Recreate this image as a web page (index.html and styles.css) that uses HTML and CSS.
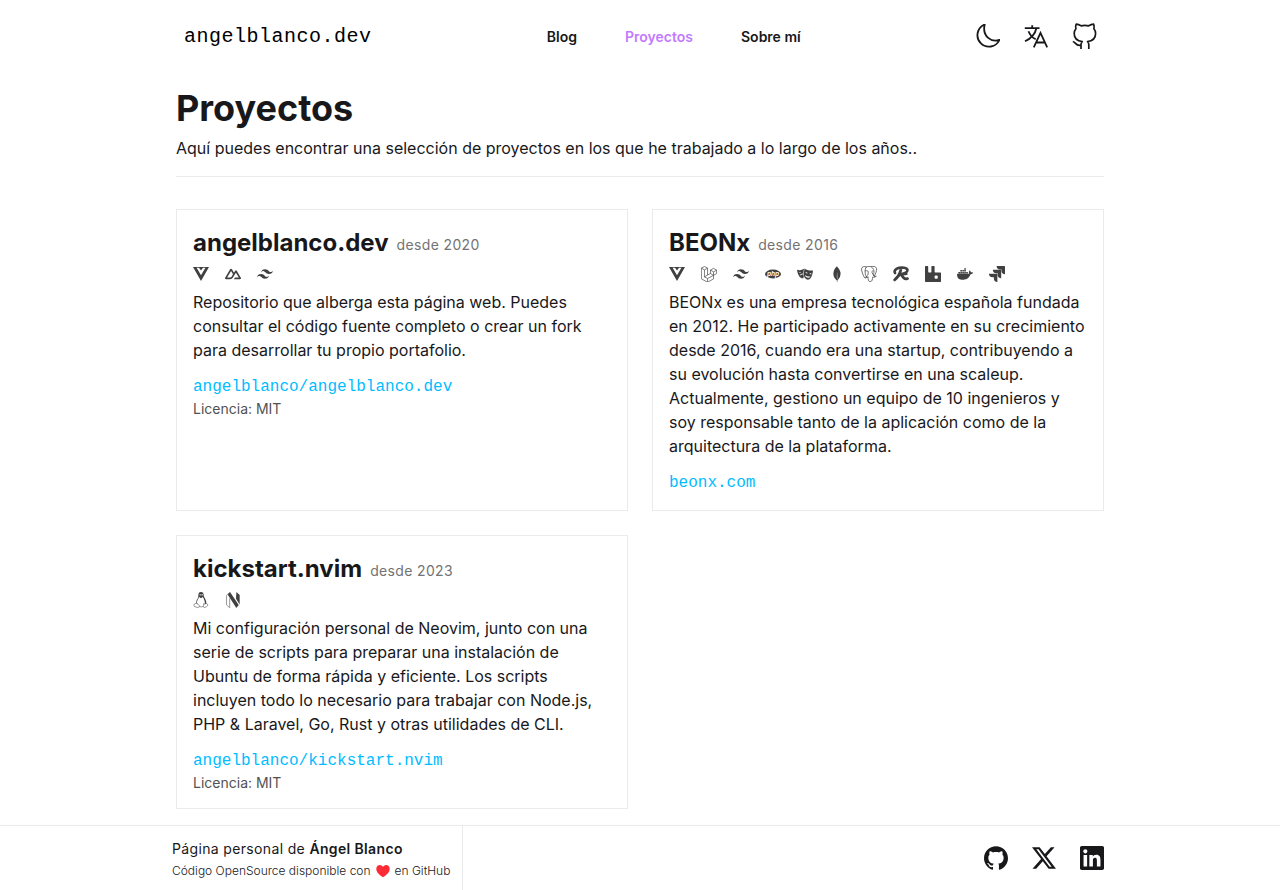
FILE: index.html
```html
<!DOCTYPE html>
<html lang="es">
<head>
<meta charset="utf-8">
<meta name="viewport" content="width=device-width, initial-scale=1">
<title>Proyectos | angelblanco.dev</title>
<link rel="stylesheet" href="styles.css">
</head>
<body>
<svg class="sprite" aria-hidden="true">
  <symbol id="vue" viewBox="0 0 24 24"><path fill-rule="evenodd" d="M0 1.600H24L12 22.400zM5.400 2.600 12 13.900 18.600 2.600H15L12 6.600 9 2.600z"/></symbol>
  <symbol id="nuxt" viewBox="0 0 24 24"><path d="M13.4642 19.8295h8.9218c.2834 0 .5618-.0723.8072-.2098a1.5899 1.5899 0 0 0 .5908-.5732 1.5293 1.5293 0 0 0 .216-.783 1.529 1.529 0 0 0-.2167-.7828L17.7916 7.4142a1.6 1.6 0 0 0-.5907-.573 1.6524 1.6524 0 0 0-.807-.2099c-.2833 0-.5616.0724-.807.2098a1.6 1.6 0 0 0-.5907.5731L13.4642 9.99l-2.9954-5.0366a1.5913 1.5913 0 0 0-.591-.573 1.6533 1.6533 0 0 0-.8071-.2098c-.2834 0-.5617.0723-.8072.2097a1.5913 1.5913 0 0 0-.591.573L.2168 17.4808A1.5292 1.5292 0 0 0 0 18.2635c-.0001.2749.0744.545.216.783a1.59 1.59 0 0 0 .5908.5732c.2454.1375.5238.2098.8072.2098h5.6003c2.219 0 3.8554-.9454 4.9813-2.7899l2.7337-4.5922L16.3935 9.99l4.3944 7.382h-5.8588ZM7.123 17.3694l-3.9083-.0009 5.8586-9.8421 2.9232 4.921-1.9572 3.2897c-.7478 1.1967-1.5972 1.6323-2.9163 1.6323z"/></symbol>
  <symbol id="tailwind" viewBox="0 0 24 24"><path d="M12.001 4.800c-3.200 0-5.200 1.600-6 4.800c1.200-1.600 2.600-2.200 4.200-1.800c.913.228 1.565.89 2.288 1.624C13.666 10.618 15.027 12 18.001 12c3.200 0 5.200-1.600 6-4.800c-1.200 1.600-2.600 2.200-4.200 1.800c-.913-.228-1.565-.89-2.288-1.624C16.337 6.182 14.976 4.800 12.001 4.800zM6.001 12c-3.200 0-5.200 1.600-6 4.800c1.200-1.600 2.600-2.200 4.200-1.800c.913.228 1.565.89 2.288 1.624c1.177 1.194 2.538 2.576 5.512 2.576c3.200 0 5.200-1.600 6-4.800c-1.200 1.600-2.600 2.200-4.200 1.800c-.913-.228-1.565-.89-2.288-1.624C10.337 13.382 8.976 12 6.001 12z"/></symbol>
  <symbol id="laravel" viewBox="0 0 24 24"><path fill="none" stroke="currentColor" stroke-width="1" stroke-linejoin="round" d="M.6 3.200 5.200.6l4.600 2.600v10.400l4.400-2.500V6.200l4.600-2.700 4.600 2.700v5.200l-4.600 2.600v5.300l-9 5.100-9.200-5.200zM.6 3.200l4.600 2.600 4.600-2.600M5.200 5.800v10.600l4.600-2.800M5.200 16.400l4.600 2.500 9-5M9.800 18.900v5.200M14.200 6.200l4.600 2.600 4.600-2.600M18.800 8.800V14M14.200 11.200l4.600 2.800"/></symbol>
  <symbol id="playwright" viewBox="0 0 24 24"><path fill-rule="evenodd" d="M0 5.800c3 1.100 6 .9 9-.8l1.600-.9c-.8 3.800-1.700 7.800-.5 10.900l-.5 3.200c-2 .3-4.400-.4-6.200-2.600C1.500 12.900.5 9.500 0 5.800zm3 4.700 3.200-1c-1-1.200-2.800-.8-3.200 1zm1 4.500c1.200-1.500 2.800-2.300 4.800-2.300l-.1-1.400c-2.800.1-4.300 1.500-4.700 3.700z"/><path fill-rule="evenodd" d="M11.300 3.600c3.500 2.700 7.800 3.700 12.700 3-.4 4.400-1.300 8-3.200 11-1.700 2.600-4.300 3.600-6.800 2.300-2.500-1.300-3.700-3.900-3.700-7.400 0-3 .4-6.200 1-8.900zm1.200 6.800 3.500 1c-.4-2-2.700-2.600-3.500-1zm6 1.600 3.500.9c-.4-2-2.700-2.500-3.500-.9zm-6.500 1.400c.4 4 6 5.700 8.200 2.200-3 .4-5.800-.4-8.200-2.200z"/></symbol>
  <symbol id="mongo" viewBox="0 0 24 24"><path d="M17.193 9.555c-1.264-5.580-4.252-7.414-4.573-8.115-.28-.394-.53-.954-.735-1.440-.036.495-.055.685-.523 1.184-.723.566-4.438 3.682-4.740 10.020-.282 5.912 4.270 9.435 4.888 9.884l.07.05A73.490 73.490 0 0111.910 24h.481c.114-1.032.284-2.056.51-3.070.417-.296.604-.463.85-.693a11.342 11.342 0 003.639-8.464c.01-.814-.103-1.662-.197-2.218zm-5.336 8.195s0-8.291.275-8.290c.213 0 .49 10.695.49 10.695-.381-.045-.765-1.760-.765-2.405z"/></symbol>
  <symbol id="postgres" viewBox="0 0 24 24"><path fill="none" stroke="currentColor" stroke-width="1.100" stroke-linecap="round" stroke-linejoin="round" d="M8.500 16.200C7.500 18.700 6 18.900 4.800 16.700 3 13.200.7 8 .8 4.400 1 .8 5 .1 8.200 1.400c-2 2-2.200 5-1.900 7.300.3 2.500-.8 4.300 2.200 7.500zM8.200 1.400c2.300-1 5-1 7.200-.3 2.800-1 7.300-.8 7.900 2.800.4 3.500-1.500 8.500-3.600 11.500-1.400-1.400-.8-3-.3-5.400.5-3.200-.4-6.200-4-8.900M9.400 14.300c1.600-.8 1.700-2.900 1.300-5.700M6.200 7.400c1.300-.9 3-.8 4.400.5M18 7.400c-2 .1-2 1.200-1.400 2.400 1 2 1.700 3.800 3.100 5.600 1.500.3 2.400 0 3.300-.3-.9 1.500-3.600 2.300-5.700 1.700-.2 3 0 6.200-3.300 6.600-3.300.3-3.400-3.400-3.500-6.500M10.500 16.500c-1.500 1-3 .9-4 .2"/></symbol>
  <symbol id="redis" viewBox="0 0 24 24"><path fill="none" stroke="currentColor" stroke-width="4" stroke-linecap="round" stroke-linejoin="round" d="M3 10.500C1.200 7 4.200 3.800 9 2.800c5-1 11.600-.5 12.500 2.700.9 3.300-4 6.500-9.200 6.500 2.200 4.300 4.200 9.200 9.500 6.800M11.800 6C10 12 7.500 17 2.500 20.800"/><path fill="none" stroke="currentColor" stroke-width="3" stroke-linecap="round" d="M4 18.500c2.500-3.500 9-6 16.500-6.500"/></symbol>
  <symbol id="rabbit" viewBox="0 0 24 24"><path d="M23.035 9.601h-7.677a.956.956 0 01-.962-.962V.962a.956.956 0 00-.962-.956H10.560a.956.956 0 00-.962.956V8.640a.956.956 0 01-.962.962H5.762a.956.956 0 01-.961-.962V.962A.956.956 0 003.839 0H.959a.956.956 0 00-.956.962v22.076A.956.956 0 00.965 24h22.070a.956.956 0 00.962-.962V10.580a.956.956 0 00-.962-.98zm-3.860 8.152a1.437 1.437 0 01-1.437 1.443h-1.924a1.437 1.437 0 01-1.436-1.443v-1.917a1.437 1.437 0 011.436-1.443h1.924a1.437 1.437 0 011.437 1.443z"/></symbol>
  <symbol id="docker" viewBox="0 0 24 24"><path d="M13.983 11.078h2.119a.186.186 0 00.186-.185V9.006a.186.186 0 00-.186-.186h-2.119a.185.185 0 00-.185.185v1.888c0 .102.083.185.185.185m-2.954-5.430h2.118a.186.186 0 00.186-.186V3.574a.186.186 0 00-.186-.185h-2.118a.185.185 0 00-.185.185v1.888c0 .102.082.185.185.185m0 2.716h2.118a.187.187 0 00.186-.186V6.290a.186.186 0 00-.186-.185h-2.118a.185.185 0 00-.185.185v1.887c0 .102.082.185.185.186m-2.930 0h2.120a.186.186 0 00.184-.186V6.290a.185.185 0 00-.185-.185H8.100a.185.185 0 00-.185.185v1.887c0 .102.083.185.185.186m-2.964 0h2.119a.186.186 0 00.185-.186V6.290a.185.185 0 00-.185-.185H5.136a.186.186 0 00-.186.185v1.887c0 .102.084.185.186.186m5.893 2.715h2.118a.186.186 0 00.186-.185V9.006a.186.186 0 00-.186-.186h-2.118a.185.185 0 00-.185.185v1.888c0 .102.082.185.185.185m-2.930 0h2.120a.185.185 0 00.184-.185V9.006a.185.185 0 00-.184-.186h-2.120a.185.185 0 00-.184.185v1.888c0 .102.083.185.185.185m-2.964 0h2.119a.185.185 0 00.185-.185V9.006a.185.185 0 00-.184-.186h-2.120a.186.186 0 00-.186.186v1.887c0 .102.084.185.186.185m-2.920 0h2.120a.185.185 0 00.184-.185V9.006a.185.185 0 00-.184-.186h-2.120a.185.185 0 00-.184.185v1.888c0 .102.082.185.185.185M23.763 9.890c-.065-.051-.672-.51-1.954-.51-.338.001-.676.03-1.010.087-.248-1.700-1.653-2.530-1.716-2.566l-.344-.199-.226.327c-.284.438-.49.922-.612 1.430-.23.97-.09 1.882.403 2.661-.595.332-1.550.413-1.744.42H.751a.751.751 0 00-.75.748 11.376 11.376 0 00.692 4.062c.545 1.428 1.355 2.480 2.410 3.124 1.180.723 3.100 1.137 5.275 1.137.983.003 1.963-.086 2.930-.266a12.248 12.248 0 003.823-1.389c.98-.567 1.860-1.288 2.610-2.136 1.252-1.418 1.998-2.997 2.553-4.400h.221c1.372 0 2.215-.549 2.680-1.009.309-.293.55-.65.707-1.046l.098-.288Z"/></symbol>
  <symbol id="jira" viewBox="0 0 24 24"><path d="M11.571 11.513H0a5.218 5.218 0 0 0 5.232 5.215h2.130v2.057A5.215 5.215 0 0 0 12.575 24V12.518a1.005 1.005 0 0 0-1.005-1.005zm5.723-5.756H5.736a5.215 5.215 0 0 0 5.215 5.214h2.129v2.058a5.218 5.218 0 0 0 5.215 5.214V6.758a1.001 1.001 0 0 0-1.001-1.001zM23.013 0H11.455a5.215 5.215 0 0 0 5.215 5.215h2.129v2.057A5.215 5.215 0 0 0 24 12.483V1.005A1.001 1.001 0 0 0 23.013 0Z"/></symbol>
  <symbol id="linux" viewBox="0 0 24 24"><path fill-rule="evenodd" d="M12 0c3 0 4.200 2.200 4 5 0 3.500 4.500 6.500 4 12l-2.500 1.500c1-4-1-8-3-11L12 9.500 9.500 7.500c-1.800 3-4 6-3.600 9.500L8 19.500 5 17c-.5-3 1-6.500 2.800-8.500C8.500 5.500 7 0 12 0zm-2 4c0 1 .3 1.500.8 1.500s.7-.5.7-1.200S11 3 10.600 3 10 3.400 10 4zm2.700 0c0 .9.4 1.500 1 1.500s.9-.6.9-1.300-.4-1.200-1-1.200-.9.400-.9 1z"/><path fill="none" stroke="currentColor" stroke-width=".8" stroke-linejoin="round" d="M5.500 16.300 9.500 20.500c.6 1.500-.5 2.800-2.500 2.800L2 21.700c-1.300-.6-.2-2-.2-3.200zM16 17.500c1 1.200 2.500 1.200 4-.8l2.600 3c-1.600 1.500-3 3-4.600 3.600-1.800.3-2.600-.8-2.400-2.500zM9.500 21.800c2 .7 4 .7 6 0"/></symbol>
  <symbol id="neovim" viewBox="0 0 24 24"><path d="M7.500 0 20.600 19.500 17 24 4.200 4.200zM17.100 0l4.900 4.600v14L16.500 10z"/><path fill="none" stroke="currentColor" stroke-width=".8" d="M7 .6 2.300 5.200v14L7 23.700V9.500"/></symbol>
  <symbol id="moon" viewBox="0 0 24 24"><path fill="none" stroke="currentColor" stroke-width="1.800" stroke-linejoin="round" d="M8.700.500A11.500 11.500 0 1 0 23.500 15.800C16 18.800 5.800 12.800 8.700.500Z"/></symbol>
  <symbol id="translate" viewBox="0 0 24 24"><path fill="none" stroke="currentColor" stroke-width="1.800" d="M.8 4.200H15.500M8.200 1.300v3M12.400 4.200C11 10.500 6.500 14.700 1 17.300M4.500 7.200c1.500 4 4 6.500 7.200 8M9.800 23.300 16.500 8.900l6.700 14.400M12 18.500h9"/></symbol>
  <symbol id="github" viewBox="0 0 24 24"><path d="M12 .297c-6.630 0-12 5.373-12 12 0 5.303 3.438 9.800 8.205 11.385.6.113.820-.258.820-.577 0-.285-.01-1.040-.015-2.040-3.338.724-4.042-1.610-4.042-1.610C4.422 18.070 3.633 17.700 3.633 17.700c-1.087-.744.084-.729.084-.729 1.205.084 1.838 1.236 1.838 1.236 1.070 1.835 2.809 1.305 3.495.998.108-.776.417-1.305.76-1.605-2.665-.3-5.466-1.332-5.466-5.930 0-1.310.465-2.380 1.235-3.220-.135-.303-.54-1.523.105-3.176 0 0 1.005-.322 3.300 1.230.96-.267 1.980-.399 3-.405 1.020.006 2.040.138 3 .405 2.280-1.552 3.285-1.230 3.285-1.230.645 1.653.24 2.873.12 3.176.765.84 1.230 1.910 1.230 3.220 0 4.610-2.805 5.625-5.475 5.920.42.36.81 1.096.81 2.220 0 1.606-.015 2.896-.015 3.286 0 .315.21.69.825.57C20.565 22.092 24 17.592 24 12.297c0-6.627-5.373-12-12-12"/></symbol>
  <symbol id="x" viewBox="0 0 24 24"><path d="M18.901 1.153h3.680l-8.040 9.190L24 22.846h-7.406l-5.800-7.584-6.638 7.584H.474l8.600-9.830L0 1.154h7.594l5.243 6.932ZM17.610 20.644h2.039L6.486 3.240H4.298Z"/></symbol>
  <symbol id="linkedin" viewBox="0 0 24 24"><path d="M20.447 20.452h-3.554v-5.569c0-1.328-.027-3.037-1.852-3.037-1.853 0-2.136 1.445-2.136 2.939v5.667H9.351V9h3.414v1.561h.046c.477-.9 1.637-1.850 3.370-1.850 3.601 0 4.267 2.370 4.267 5.455v6.286zM5.337 7.433c-1.144 0-2.063-.926-2.063-2.065 0-1.138.92-2.063 2.063-2.063 1.140 0 2.064.925 2.064 2.063 0 1.139-.925 2.065-2.064 2.065zm1.782 13.019H3.555V9h3.564v11.452zM22.225 0H1.771C.792 0 0 .774 0 1.729v20.542C0 23.227.792 24 1.771 24h20.451C23.200 24 24 23.227 24 22.271V1.729C24 .774 23.200 0 22.222 0h.003z"/></symbol>
  <symbol id="heart" viewBox="0 0 24 24"><path d="M12 22.500C7 19.500.5 14.500.5 8.500.5 4.500 3.200 1.800 6.500 1.800c2.200 0 4.200 1.200 5.500 3.200 1.300-2 3.300-3.200 5.500-3.200 3.300 0 6 2.700 6 6.700 0 6-6.500 11-11.500 14z"/></symbol>
</svg>

<header class="header">
  <a class="brand" href="#">angelblanco.dev</a>
  <nav class="nav" aria-label="Principal">
    <a href="#">Blog</a>
    <a class="active" href="#" aria-current="page">Proyectos</a>
    <a href="#">Sobre mí</a>
  </nav>
  <div class="actions">
    <button type="button" aria-label="Cambiar tema"><svg class="icon"><use href="#moon"/></svg></button>
    <button type="button" aria-label="Cambiar idioma"><svg class="icon"><use href="#translate"/></svg></button>
    <a href="#" aria-label="GitHub"><svg class="icon octocat" viewBox="0 0 24 26"><path fill="none" stroke="currentColor" stroke-width="1.700" stroke-linejoin="round" d="M9 26v-4.500c0-1.500.5-2.200 1.300-3-4.500-.5-8.100-2.700-8.100-8 0-2 .7-3.500 1.700-4.700-.5-1.700-.4-3.200.3-4.600 1.900.2 3.400.8 4.900 1.600a16 16 0 0 1 7.600 0c1.500-.8 3-1.400 4.900-1.600.7 1.400.8 2.900.3 4.600 1 1.200 1.700 2.700 1.700 4.700 0 5.300-3.600 7.500-8.100 8 .8.800 1.300 1.500 1.300 3V26M9 22.200c-5.400 1.400-5-3.200-8.200-3.700"/></svg></a>
  </div>
</header>

<main class="main">
  <div class="intro">
    <h1>Proyectos</h1>
    <p>Aquí puedes encontrar una selección de proyectos en los que he trabajado a lo largo de los años..</p>
  </div>
  <div class="grid">
    <article class="card">
      <div class="heading"><h2>angelblanco.dev</h2><span class="since">desde 2020</span></div>
      <div class="stack">
        <svg><use href="#vue"/></svg><svg><use href="#nuxt"/></svg><svg><use href="#tailwind"/></svg>
      </div>
      <p>Repositorio que alberga esta página web. Puedes consultar el código fuente completo o crear un fork para desarrollar tu propio portafolio.</p>
      <a class="link" href="#">angelblanco/angelblanco.dev</a>
      <span class="license">Licencia: MIT</span>
    </article>
    <article class="card">
      <div class="heading"><h2>BEONx</h2><span class="since">desde 2016</span></div>
      <div class="stack">
        <svg><use href="#vue"/></svg><svg><use href="#laravel"/></svg><svg><use href="#tailwind"/></svg><svg viewBox="0 0 24 24"><ellipse cx="12" cy="12" rx="12" ry="6.600"/><text class="php-mark" x="12" y="14.500" text-anchor="middle">php</text></svg><svg><use href="#playwright"/></svg><svg><use href="#mongo"/></svg><svg><use href="#postgres"/></svg><svg><use href="#redis"/></svg><svg><use href="#rabbit"/></svg><svg><use href="#docker"/></svg><svg><use href="#jira"/></svg>
      </div>
      <p>BEONx es una empresa tecnológica española fundada en 2012. He participado activamente en su crecimiento desde 2016, cuando era una startup, contribuyendo a su evolución hasta convertirse en una scaleup. Actualmente, gestiono un equipo de 10 ingenieros y soy responsable tanto de la aplicación como de la arquitectura de la plataforma.</p>
      <a class="link" href="#">beonx.com</a>
    </article>
    <article class="card">
      <div class="heading"><h2>kickstart.nvim</h2><span class="since">desde 2023</span></div>
      <div class="stack">
        <svg><use href="#linux"/></svg><svg><use href="#neovim"/></svg>
      </div>
      <p>Mi configuración personal de Neovim, junto con una serie de scripts para preparar una instalación de Ubuntu de forma rápida y eficiente. Los scripts incluyen todo lo necesario para trabajar con Node.js, PHP &amp; Laravel, Go, Rust y otras utilidades de CLI.</p>
      <a class="link" href="#">angelblanco/kickstart.nvim</a>
      <span class="license">Licencia: MIT</span>
    </article>
  </div>
</main>

<footer class="footer">
  <div class="footer-inner">
    <div class="credits">
      <p class="owner">Página personal de <strong>Ángel Blanco</strong></p>
      <a class="source" href="#"><span>Código OpenSource disponible con</span><svg class="heart"><use href="#heart"/></svg><span>en GitHub</span></a>
    </div>
    <div class="social">
      <a href="#" aria-label="GitHub"><svg class="icon"><use href="#github"/></svg></a>
      <a href="#" aria-label="X"><svg class="icon"><use href="#x"/></svg></a>
      <a href="#" aria-label="LinkedIn"><svg class="icon"><use href="#linkedin"/></svg></a>
    </div>
  </div>
</footer>
</body>
</html>
```
FILE: styles.css
```css
* { box-sizing: border-box; margin: 0; padding: 0; }

body {
  display: flex;
  flex-direction: column;
  min-height: 100vh;
  background: #fff;
  color: #18181b;
  font: 16px/24px Inter, "Noto Sans", sans-serif;
}

a { color: inherit; text-decoration: none; }
button { border: 0; background: none; color: inherit; cursor: pointer; }
svg { display: block; fill: currentColor; }

.sprite { position: absolute; width: 0; height: 0; }
.icon { width: 24px; height: 24px; overflow: visible; }
.octocat { height: 26px; }
.php-mark { fill: #fff; font: italic bold 10px "Liberation Sans", sans-serif; }

.header {
  display: flex;
  align-items: center;
  justify-content: space-between;
  width: 100%;
  max-width: 960px;
  min-height: 72px;
  margin: 0 auto;
  padding: 0 24px;
}
.brand {
  padding-top: 2px;
  color: #000;
  font: 20px/28px "Liberation Mono", monospace;
  letter-spacing: 0.025em;
}
.nav { display: flex; gap: 48px; padding-top: 2px; font-size: 14px; font-weight: 600; }
.active { color: #c27aff; }
.actions, .social { display: flex; align-items: center; gap: 24px; }

.main {
  flex: 1;
  width: 100%;
  max-width: 960px;
  margin: 0 auto;
  padding: 16px;
}
.intro { padding-bottom: 16px; border-bottom: 1px solid #ebebeb; }
.intro h1 { margin-bottom: 8px; font-size: 36px; line-height: 40px; }

.grid {
  display: grid;
  grid-template-columns: repeat(auto-fit, minmax(min(100%, 400px), 1fr));
  gap: 24px;
  margin-top: 32px;
}
.card {
  display: flex;
  flex-direction: column;
  align-items: flex-start;
  padding: 16px 16px 15px;
  border: 1px solid #ebebeb;
}
.heading { display: flex; align-items: flex-end; gap: 8px; }
.heading h2 { font-size: 24px; line-height: 34px; }
.since { color: #737373; font-size: 14px; line-height: 30px; letter-spacing: 0.025em; }
.stack { display: flex; gap: 16px; margin: 6px 0 8px; color: #404040; }
.stack svg { width: 16px; height: 16px; }
.link { margin-top: 13px; color: #00bcff; font-family: "Liberation Mono", monospace; }
.license { color: #525252; font-size: 14px; line-height: 20px; }

.footer { border-top: 1px solid #ebebeb; }
.footer-inner {
  display: flex;
  justify-content: space-between;
  max-width: 960px;
  min-height: 64px;
  margin: 0 auto;
  padding-right: 16px;
}
.credits {
  display: flex;
  flex-direction: column;
  justify-content: center;
  padding: 2px 12px 0;
  border-right: 1px solid #ebebeb;
}
.owner { font-size: 14px; letter-spacing: 0.025em; }
.owner strong { font-weight: 600; }
.source {
  display: flex;
  align-items: center;
  gap: 4px;
  font-size: 12px;
  font-weight: 300;
  line-height: 20px;
}
.heart { width: 16px; height: 14px; color: #fb2c36; }
```
